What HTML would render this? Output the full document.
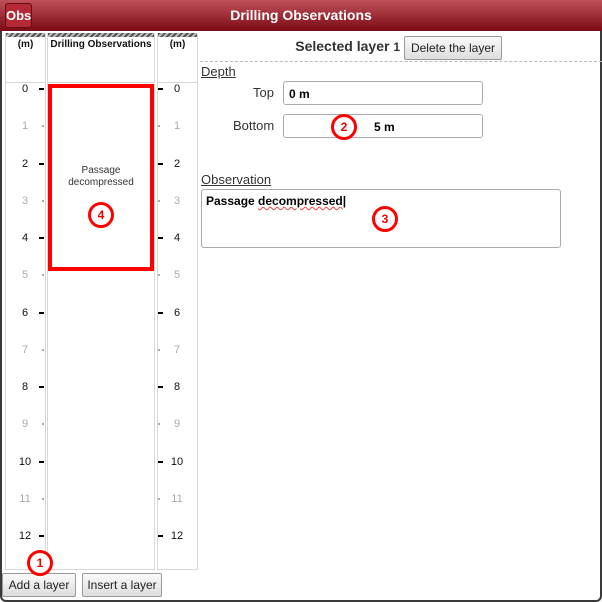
<!DOCTYPE html>
<html><head><style>
*{margin:0;padding:0;box-sizing:border-box}
body{width:602px;height:602px;background:#fff;font-family:"Liberation Sans",sans-serif;position:relative;overflow:hidden}
.frame{position:absolute;left:0;top:0;width:602px;height:602px;border:2px solid #3a3a3a;border-top:none;border-radius:0 0 6px 6px}
.title{position:absolute;left:0;top:0;width:602px;height:31px;background:linear-gradient(#c0505a,#7a0a14);color:#fff;font-weight:bold;font-size:14px;text-align:center;line-height:31px}
.logo{position:absolute;left:5px;top:3px;width:27px;height:25px;background:#b32a36;border:1px solid #6a0a12;border-radius:3px;font-size:13px;line-height:23px;text-align:center;color:#fff}
.col{position:absolute;top:33px;height:537px;border:1px solid #d8d8d8;border-top:none}
.col:before{content:"";position:absolute;left:0;right:0;top:0;height:4px;background:repeating-linear-gradient(135deg,#555 0 2px,#bbb 2px 4px)}
.hd{position:absolute;top:6px;left:0;right:0;text-align:center;font-weight:bold;font-size:10px;color:#111}
.sep{position:absolute;left:0;right:0;top:49px;border-top:1px solid #d8d8d8}
.n{position:absolute;font-size:11px;width:20px;text-align:center}
.t{position:absolute;height:2px;background:#000;width:5px}
.ts{position:absolute;height:2px;width:2px;background:#aaa}
.red{position:absolute;left:48px;top:84px;width:106px;height:187px;border:4px solid #f00}
.circ{position:absolute;width:26px;height:26px;border:3px solid #f00;border-radius:50%;background:#fff;color:#e00;font-weight:bold;font-size:12px;text-align:center;line-height:20px}
.btn{position:absolute;height:24px;border:1px solid #999;border-radius:2px;background:linear-gradient(#fafafa,#ddd);font-size:12px;color:#222;text-align:center;line-height:22px}
.inp{position:absolute;border:1px solid #aaa;border-radius:3px;background:#fff;font-size:12px;font-weight:bold}
.lbl{position:absolute;font-size:12px;color:#333}
</style></head><body>
<div class="frame"></div>
<div class="title">Drilling Observations<div class="logo">Obs</div></div>

<div class="col" style="left:5px;width:41px"><div class="hd">(m)</div><div class="sep"></div></div>
<div class="col" style="left:47px;width:108px"><div class="hd">Drilling Observations</div><div class="sep"></div></div>
<div class="col" style="left:157px;width:41px"><div class="hd">(m)</div><div class="sep"></div></div>

<div id="ticks"></div>
<script>
var h='';for(var i=0;i<=12;i++){var y=89+i*37.25;var maj=i%2==0;var c=maj?'#111':'#aaa';
h+='<div class="n" style="left:15px;top:'+(y-6)+'px;color:'+c+'">'+i+'</div>';
h+='<div class="n" style="left:167px;top:'+(y-6)+'px;color:'+c+'">'+i+'</div>';
if(maj){h+='<div class="t" style="left:39px;top:'+(y-1)+'px"></div><div class="t" style="left:158px;top:'+(y-1)+'px"></div>';}
else{h+='<div class="ts" style="left:42px;top:'+(y-1)+'px"></div><div class="ts" style="left:158px;top:'+(y-1)+'px"></div>';}}
document.getElementById('ticks').innerHTML=h;
</script>

<div class="red"></div>
<div style="position:absolute;left:52px;top:165px;width:98px;text-align:center;font-size:10px;color:#333;line-height:12px">Passage<br>decompressed</div>
<div class="circ" style="left:88px;top:202px">4</div>

<div style="position:absolute;left:200px;top:61px;width:402px;border-top:1px dashed #bbb"></div>
<div style="position:absolute;right:202px;top:38px;font-size:14px;font-weight:bold;color:#333;white-space:nowrap">Selected layer <span style="font-size:12px">1</span></div>
<div class="btn" style="left:404px;top:36px;width:98px">Delete the layer</div>

<div class="lbl" style="left:201px;top:64px;text-decoration:underline;font-size:13px">Depth</div>
<div class="lbl" style="left:253px;top:85px;font-size:13px">Top</div>
<div class="inp" style="left:283px;top:81px;width:200px;height:24px;padding:5px 0 0 5px">0 m</div>
<div class="lbl" style="left:233px;top:118px;font-size:13px">Bottom</div>
<div class="inp" style="left:283px;top:114px;width:200px;height:24px;padding:5px 0 0 90px">5 m</div>
<div class="circ" style="left:331px;top:114px">2</div>

<div class="lbl" style="left:201px;top:172px;text-decoration:underline;font-size:13px">Observation</div>
<div class="inp" style="left:201px;top:189px;width:360px;height:59px;padding:4px 0 0 4px">Passage <span style="text-decoration:underline wavy #e44;text-decoration-thickness:1px">decompressed</span>|</div>
<div class="circ" style="left:372px;top:206px">3</div>

<div class="btn" style="left:2px;top:573px;width:74px">Add a layer</div>
<div class="btn" style="left:82px;top:573px;width:80px">Insert a layer</div>
<div class="circ" style="left:27px;top:550px">1</div>
</body></html>
